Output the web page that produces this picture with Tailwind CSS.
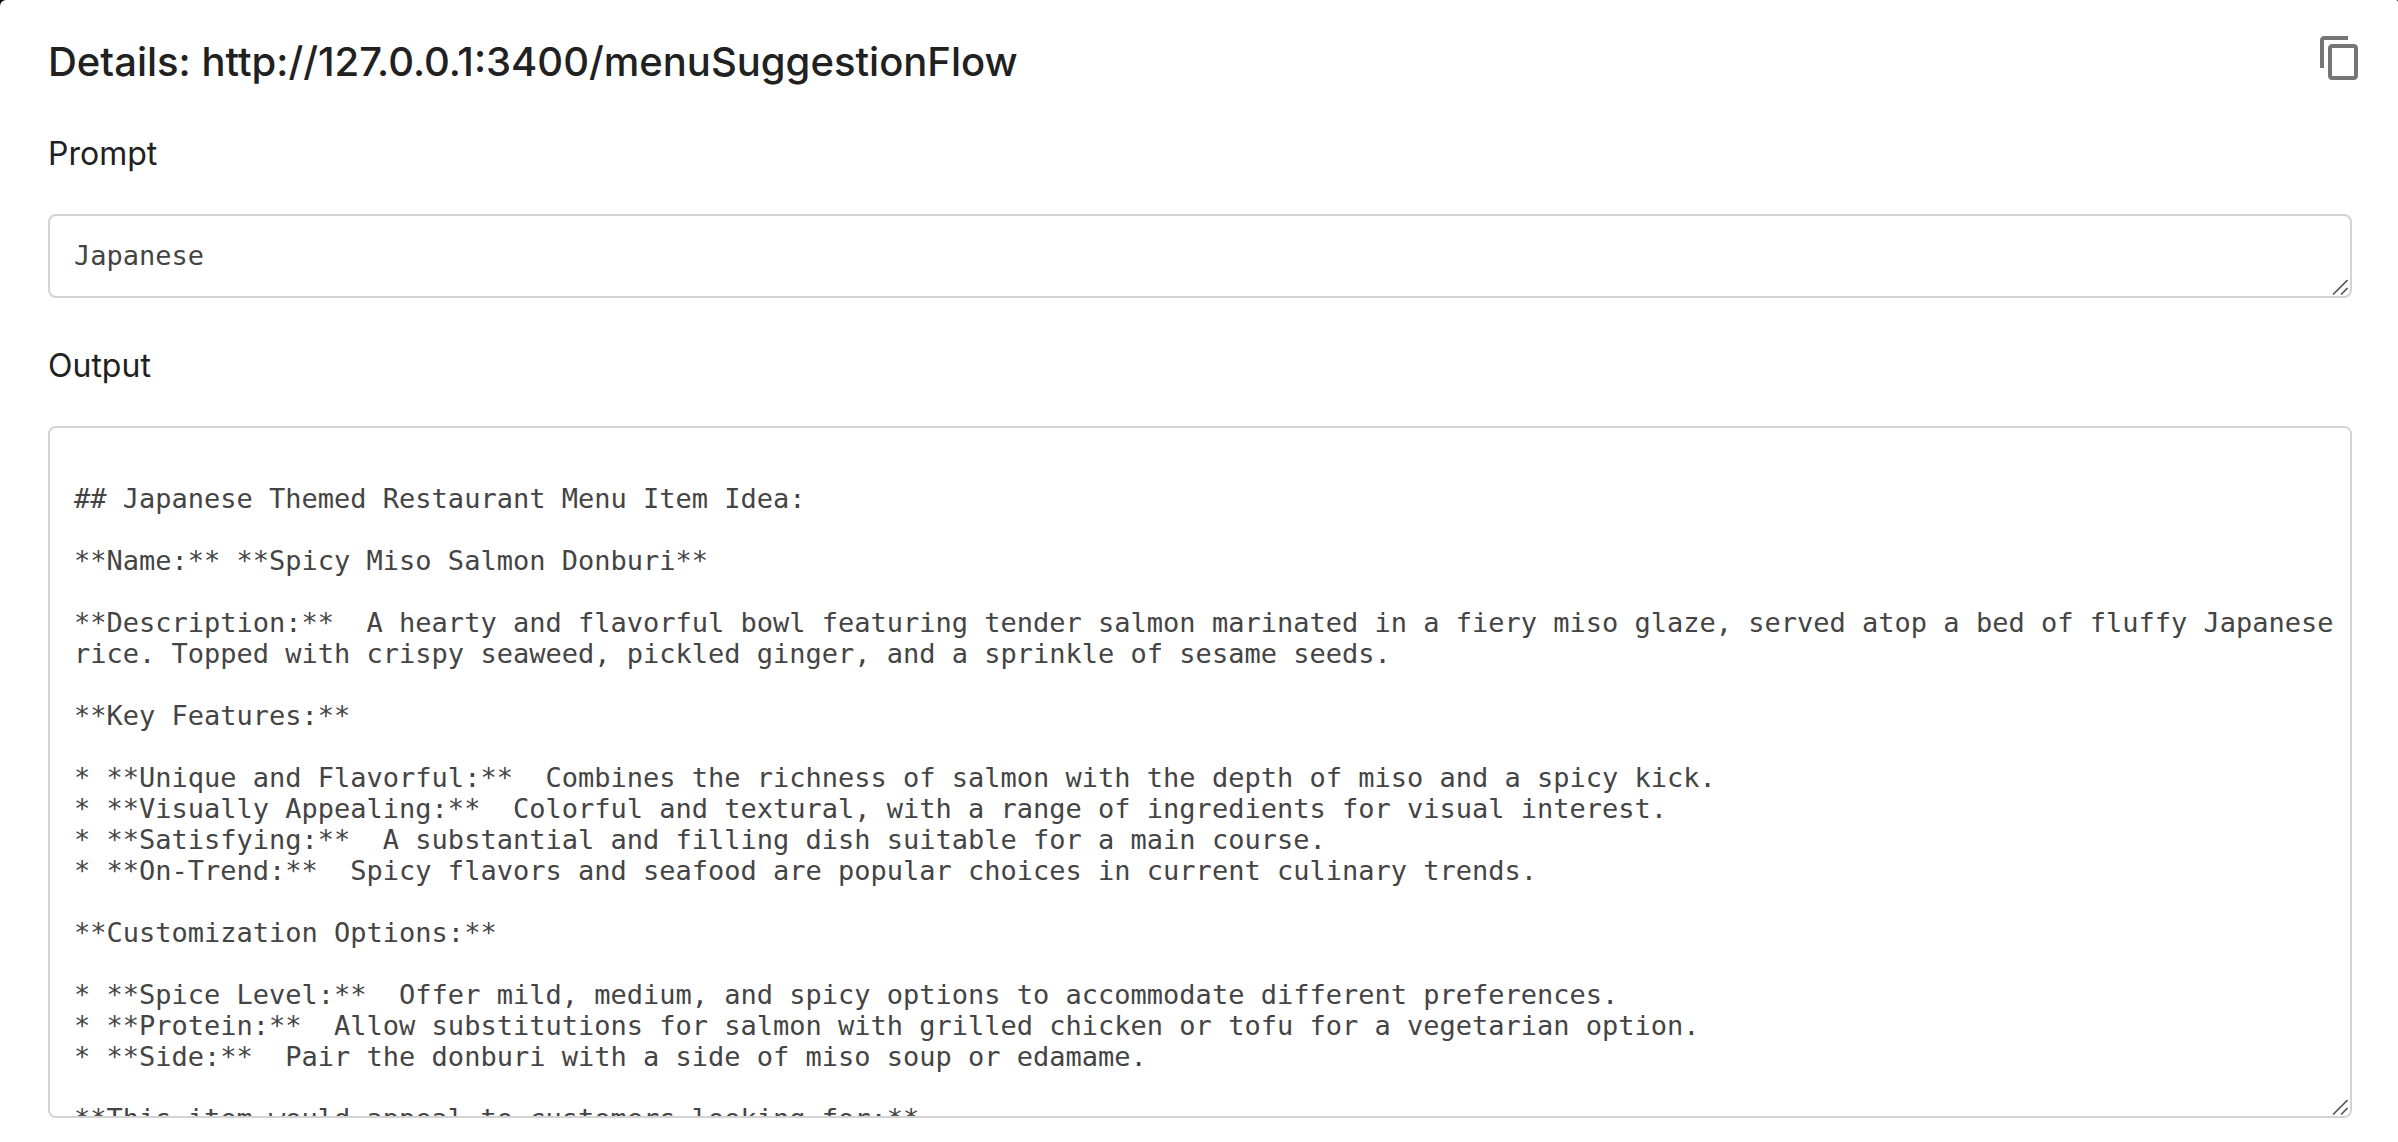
<!DOCTYPE html>
<html lang="en">
<head>
<meta charset="utf-8">
<meta name="viewport" content="width=device-width, initial-scale=1">
<title>Details</title>
<script src="https://cdn.jsdelivr.net/npm/@tailwindcss/browser@4"></script>
</head>
<body class="bg-black">
<main class="min-h-screen rounded-tl-md rounded-tr-xs bg-white pt-8 pr-[46px] pb-6 pl-12 font-['Inter',sans-serif] text-[#212121]">
  <header class="flex items-start justify-between">
    <h1 class="text-[40px] leading-[60px] font-medium">Details: http://127.0.0.1:3400/menuSuggestionFlow</h1>
    <button type="button" aria-label="Copy" class="-mr-3 pt-0.5 text-[#757575]">
      <svg class="size-12" viewBox="0 0 24 24" fill="currentColor" aria-hidden="true"><path d="M16 1H4c-1.100 0-2 .9-2 2v14h2V3h12V1zm3 4H8c-1.100 0-2 .9-2 2v14c0 1.100.9 2 2 2h11c1.100 0 2-.9 2-2V7c0-1.100-.9-2-2-2zm0 16H8V7h11v14z"/></svg>
    </button>
  </header>

  <label for="prompt" class="mt-10 block text-[32px] leading-[44px]">Prompt</label>
  <div class="relative mt-[38px]">
    <textarea id="prompt" rows="1" class="block h-[84px] w-full resize-none rounded-lg border-2 border-[#d3d3d3] bg-white py-6 pr-3 pl-6 font-['DejaVu_Sans_Mono',monospace] text-[27px] leading-[31px] text-[#444444] outline-none [scrollbar-width:none]">Japanese</textarea>
    <svg class="pointer-events-none absolute right-1 bottom-[3px] size-4 text-[#555555]" viewBox="0 0 16 16" fill="none" stroke="currentColor" stroke-width="1.600" aria-hidden="true"><path d="M1 15.500 15.500 1M9 15.500 15.500 9"/></svg>
  </div>

  <label for="output" class="mt-[46px] block text-[32px] leading-[44px]">Output</label>
  <div class="relative mt-[38px]">
    <textarea id="output" class="block h-[692px] w-full resize-none rounded-lg border-2 border-[#d3d3d3] bg-white py-6 pr-3 pl-6 font-['DejaVu_Sans_Mono',monospace] text-[27px] leading-[31px] text-[#444444] outline-none [scrollbar-width:none]">

## Japanese Themed Restaurant Menu Item Idea:

**Name:** **Spicy Miso Salmon Donburi**

**Description:**  A hearty and flavorful bowl featuring tender salmon marinated in a fiery miso glaze, served atop a bed of fluffy Japanese rice. Topped with crispy seaweed, pickled ginger, and a sprinkle of sesame seeds.

**Key Features:**

* **Unique and Flavorful:**  Combines the richness of salmon with the depth of miso and a spicy kick.
* **Visually Appealing:**  Colorful and textural, with a range of ingredients for visual interest.
* **Satisfying:**  A substantial and filling dish suitable for a main course.
* **On-Trend:**  Spicy flavors and seafood are popular choices in current culinary trends.

**Customization Options:**

* **Spice Level:**  Offer mild, medium, and spicy options to accommodate different preferences.
* **Protein:**  Allow substitutions for salmon with grilled chicken or tofu for a vegetarian option.
* **Side:**  Pair the donburi with a side of miso soup or edamame.

**This item would appeal to customers looking for:**
</textarea>
    <svg class="pointer-events-none absolute right-1 bottom-[3px] size-4 text-[#555555]" viewBox="0 0 16 16" fill="none" stroke="currentColor" stroke-width="1.600" aria-hidden="true"><path d="M1 15.500 15.500 1M9 15.500 15.500 9"/></svg>
  </div>
</main>
</body>
</html>
